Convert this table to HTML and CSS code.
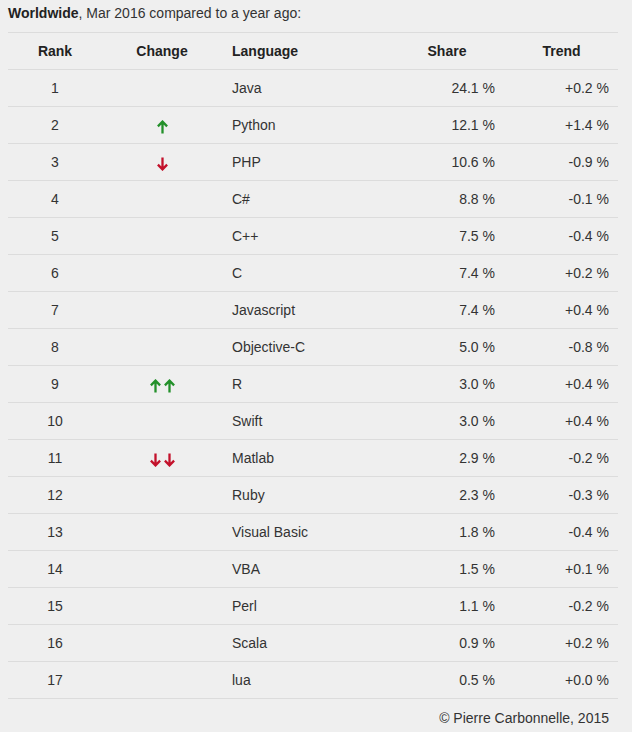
FILE: index.html
```html
<!DOCTYPE html>
<html>
<head>
<meta charset="utf-8">
<link rel="stylesheet" href="styles.css">
</head>
<body>
<div class="page">
  <p class="title"><b>Worldwide</b>, Mar 2016 compared to a year ago:</p>
  <table class="rank-table">
    <colgroup>
      <col class="c-rank"><col class="c-change"><col class="c-lang"><col class="c-share"><col class="c-trend">
    </colgroup>
    <thead>
      <tr><th>Rank</th><th>Change</th><th class="left">Language</th><th>Share</th><th>Trend</th></tr>
    </thead>
    <tbody>
      <tr><td>1</td><td></td><td class="left">Java</td><td class="share">24.1 %</td><td class="right">+0.2 %</td></tr>
      <tr><td>2</td><td><span class="arrows up"><svg viewBox="0 0 12 14" class="arrow"><path d="M6 13.5V2M1.4 6.4L6 1.6L10.6 6.4"/></svg></span></td><td class="left">Python</td><td class="share">12.1 %</td><td class="right">+1.4 %</td></tr>
      <tr><td>3</td><td><span class="arrows down"><svg viewBox="0 0 12 14" class="arrow"><path d="M6 0.5V12M1.4 7.6L6 12.4L10.6 7.6"/></svg></span></td><td class="left">PHP</td><td class="share">10.6 %</td><td class="right">-0.9 %</td></tr>
      <tr><td>4</td><td></td><td class="left">C#</td><td class="share">8.8 %</td><td class="right">-0.1 %</td></tr>
      <tr><td>5</td><td></td><td class="left">C++</td><td class="share">7.5 %</td><td class="right">-0.4 %</td></tr>
      <tr><td>6</td><td></td><td class="left">C</td><td class="share">7.4 %</td><td class="right">+0.2 %</td></tr>
      <tr><td>7</td><td></td><td class="left">Javascript</td><td class="share">7.4 %</td><td class="right">+0.4 %</td></tr>
      <tr><td>8</td><td></td><td class="left">Objective-C</td><td class="share">5.0 %</td><td class="right">-0.8 %</td></tr>
      <tr><td>9</td><td><span class="arrows up"><svg viewBox="0 0 12 14" class="arrow"><path d="M6 13.5V2M1.4 6.4L6 1.6L10.6 6.4"/></svg><svg viewBox="0 0 12 14" class="arrow"><path d="M6 13.5V2M1.4 6.4L6 1.6L10.6 6.4"/></svg></span></td><td class="left">R</td><td class="share">3.0 %</td><td class="right">+0.4 %</td></tr>
      <tr><td>10</td><td></td><td class="left">Swift</td><td class="share">3.0 %</td><td class="right">+0.4 %</td></tr>
      <tr><td>11</td><td><span class="arrows down"><svg viewBox="0 0 12 14" class="arrow"><path d="M6 0.5V12M1.4 7.6L6 12.4L10.6 7.6"/></svg><svg viewBox="0 0 12 14" class="arrow"><path d="M6 0.5V12M1.4 7.6L6 12.4L10.6 7.6"/></svg></span></td><td class="left">Matlab</td><td class="share">2.9 %</td><td class="right">-0.2 %</td></tr>
      <tr><td>12</td><td></td><td class="left">Ruby</td><td class="share">2.3 %</td><td class="right">-0.3 %</td></tr>
      <tr><td>13</td><td></td><td class="left">Visual Basic</td><td class="share">1.8 %</td><td class="right">-0.4 %</td></tr>
      <tr><td>14</td><td></td><td class="left">VBA</td><td class="share">1.5 %</td><td class="right">+0.1 %</td></tr>
      <tr><td>15</td><td></td><td class="left">Perl</td><td class="share">1.1 %</td><td class="right">-0.2 %</td></tr>
      <tr><td>16</td><td></td><td class="left">Scala</td><td class="share">0.9 %</td><td class="right">+0.2 %</td></tr>
      <tr><td>17</td><td></td><td class="left">lua</td><td class="share">0.5 %</td><td class="right">+0.0 %</td></tr>
    </tbody>
  </table>
  <p class="credit">© Pierre Carbonnelle, 2015</p>
</div>
</body>
</html>
```

FILE: styles.css
```css
html, body {
  margin: 0;
  padding: 0;
  background: #efefef;
}
body {
  font-family: "Liberation Sans", Arial, Helvetica, sans-serif;
  font-size: 14px;
  color: #333;
}
.page {
  padding: 3px 14px 0 8px;
}
.title {
  margin: 0 0 9px 0;
  line-height: 20px;
  color: #333;
}
.title b {
  color: #222;
}
.rank-table {
  width: 610px;
  border-collapse: separate;
  border-spacing: 0;
  table-layout: fixed;
}
.c-rank { width: 94px; }
.c-change { width: 120px; }
.c-lang { width: 167px; }
.c-share { width: 116px; }
.c-trend { width: 113px; }
.rank-table th,
.rank-table td {
  height: 36px;
  padding: 0 10px;
  border-bottom: 1px solid #dcdcdc;
  text-align: center;
  vertical-align: middle;
  line-height: 18px;
  white-space: nowrap;
}
.rank-table th {
  font-weight: bold;
  color: #222;
  border-top: 1px solid #dcdcdc;
}
.rank-table .left { text-align: left; }
.rank-table .right { text-align: right; padding-right: 9px; }
.rank-table .share { text-align: right; padding-right: 10px; }
.arrows {
  display: inline-flex;
  gap: 1px;
  vertical-align: middle;
  position: relative;
  top: 1px;
}
.arrow {
  width: 13px;
  height: 14px;
  fill: none;
  stroke-width: 2.3;
  stroke-linecap: butt;
  stroke-linejoin: miter;
}
.up .arrow { stroke: #23902a; }
.down .arrow { stroke: #c3112b; }
.credit {
  margin: 0;
  padding: 10px 9px 0 0;
  text-align: right;
  line-height: 18px;
  width: 610px;
  box-sizing: border-box;
}
```
